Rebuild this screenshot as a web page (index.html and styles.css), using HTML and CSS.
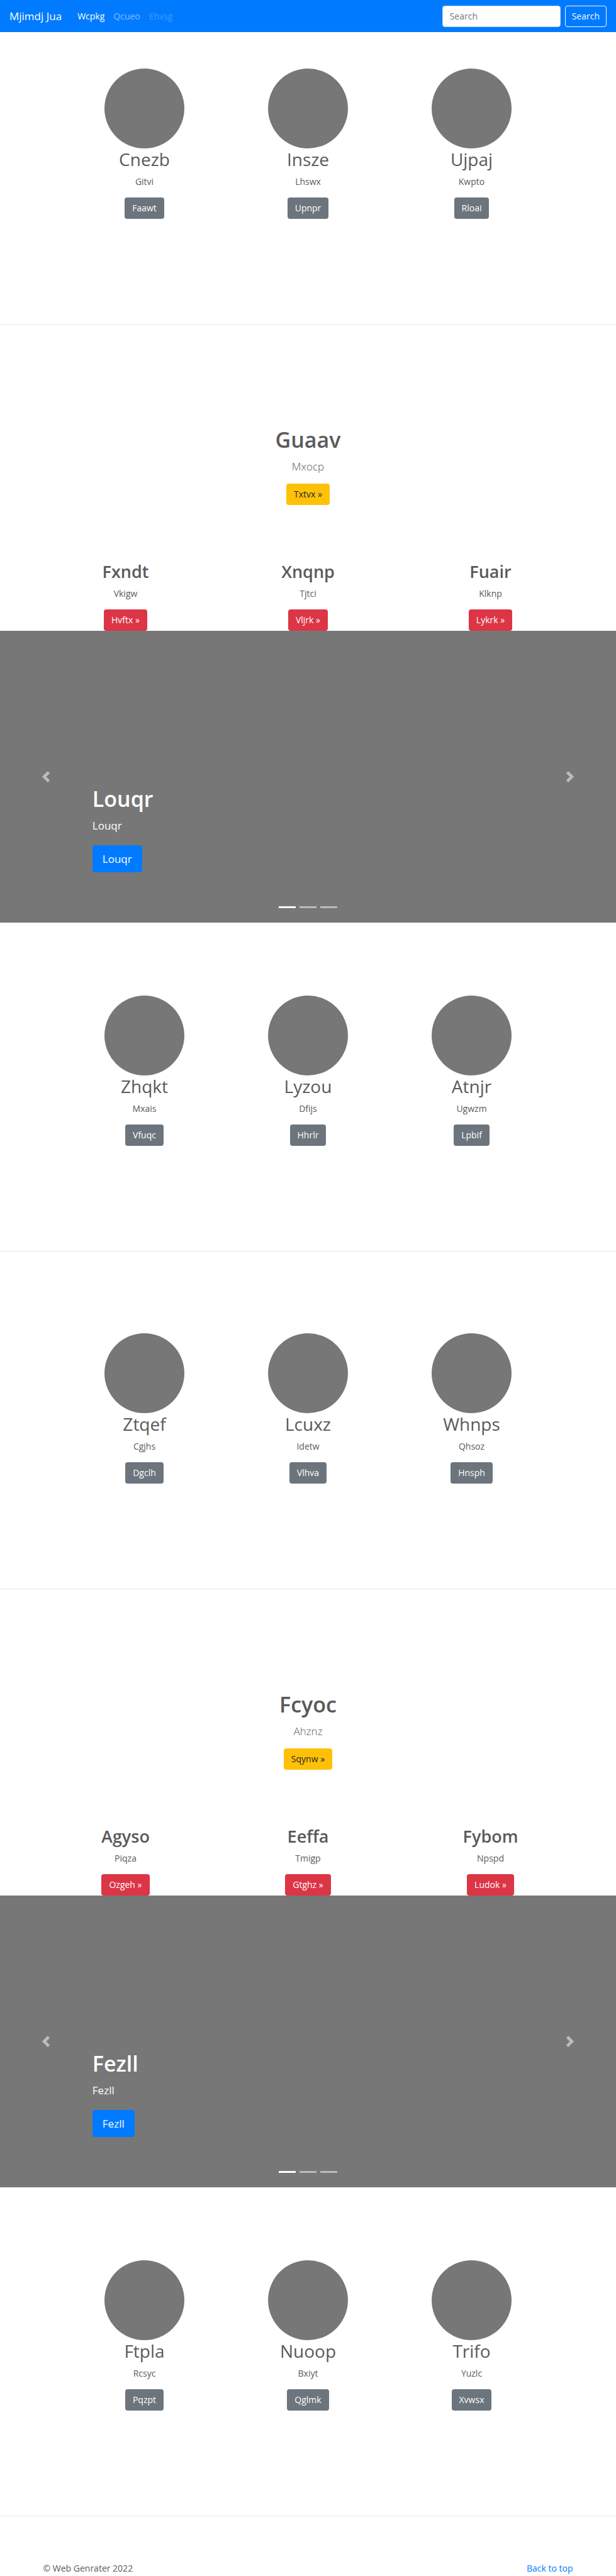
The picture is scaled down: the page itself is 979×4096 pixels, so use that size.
FILE: index.html
```html
<!DOCTYPE html>
<html lang="en">
<head>
<meta charset="utf-8">
<meta name="viewport" content="width=device-width, initial-scale=1">
<title>Mjimdj Jua</title>
<link rel="stylesheet" href="styles.css">
</head>
<body>
<header class="navbar" id="top">
  <a class="brand" href="#top">Mjimdj Jua</a>
  <nav class="nav-links">
    <a class="nav-link active" href="#">Wcpkg</a>
    <a class="nav-link" href="#">Qcueo</a>
    <a class="nav-link disabled" href="#" aria-disabled="true">Ehvsg</a>
  </nav>
  <form class="search">
    <input class="search-input" type="search" placeholder="Search" aria-label="Search">
    <button class="btn btn-outline" type="submit">Search</button>
  </form>
</header>
<main>
  <section class="features">
    <div class="feature"><div class="avatar"></div><h2>Cnezb</h2><p>Gitvi</p><a class="btn btn-secondary" href="#">Faawt</a></div>
    <div class="feature"><div class="avatar"></div><h2>Insze</h2><p>Lhswx</p><a class="btn btn-secondary" href="#">Upnpr</a></div>
    <div class="feature"><div class="avatar"></div><h2>Ujpaj</h2><p>Kwpto</p><a class="btn btn-secondary" href="#">Rloai</a></div>
  </section>
  <hr class="divider">

  <section class="hero">
    <h1>Guaav</h1>
    <p class="lead">Mxocp</p>
    <a class="btn btn-warning" href="#">Txtvx »</a>
  </section>
  <section class="cards">
    <div class="card"><h2>Fxndt</h2><p>Vkigw</p><a class="btn btn-danger" href="#">Hvftx »</a></div>
    <div class="card"><h2>Xnqnp</h2><p>Tjtci</p><a class="btn btn-danger" href="#">Vljrk »</a></div>
    <div class="card"><h2>Fuair</h2><p>Klknp</p><a class="btn btn-danger" href="#">Lykrk »</a></div>
  </section>

  <section class="carousel">
    <button class="control" type="button" aria-label="Previous"><svg class="chevron" viewBox="0 0 8 8"><path d="M5.25 0l-4 4 4 4 1.5-1.5L4.25 4l2.5-2.5L5.25 0z"/></svg></button>
    <div class="slide">
      <div class="caption">
        <h2>Louqr</h2>
        <p>Louqr</p>
        <a class="btn btn-primary" href="#">Louqr</a>
      </div>
      <div class="indicators">
        <button class="indicator current" type="button" aria-label="Slide 1"></button>
        <button class="indicator" type="button" aria-label="Slide 2"></button>
        <button class="indicator" type="button" aria-label="Slide 3"></button>
      </div>
    </div>
    <button class="control" type="button" aria-label="Next"><svg class="chevron" viewBox="0 0 8 8"><path d="M2.75 0l-1.5 1.5L3.75 4l-2.5 2.5L2.75 8l4-4-4-4z"/></svg></button>
  </section>

  <section class="features">
    <div class="feature"><div class="avatar"></div><h2>Zhqkt</h2><p>Mxais</p><a class="btn btn-secondary" href="#">Vfuqc</a></div>
    <div class="feature"><div class="avatar"></div><h2>Lyzou</h2><p>Dfijs</p><a class="btn btn-secondary" href="#">Hhrlr</a></div>
    <div class="feature"><div class="avatar"></div><h2>Atnjr</h2><p>Ugwzm</p><a class="btn btn-secondary" href="#">Lpbif</a></div>
  </section>
  <hr class="divider">

  <section class="features">
    <div class="feature"><div class="avatar"></div><h2>Ztqef</h2><p>Cgjhs</p><a class="btn btn-secondary" href="#">Dgclh</a></div>
    <div class="feature"><div class="avatar"></div><h2>Lcuxz</h2><p>Idetw</p><a class="btn btn-secondary" href="#">Vlhva</a></div>
    <div class="feature"><div class="avatar"></div><h2>Whnps</h2><p>Qhsoz</p><a class="btn btn-secondary" href="#">Hnsph</a></div>
  </section>
  <hr class="divider">

  <section class="hero">
    <h1>Fcyoc</h1>
    <p class="lead">Ahznz</p>
    <a class="btn btn-warning" href="#">Sqynw »</a>
  </section>
  <section class="cards">
    <div class="card"><h2>Agyso</h2><p>Piqza</p><a class="btn btn-danger" href="#">Ozgeh »</a></div>
    <div class="card"><h2>Eeffa</h2><p>Tmigp</p><a class="btn btn-danger" href="#">Gtghz »</a></div>
    <div class="card"><h2>Fybom</h2><p>Npspd</p><a class="btn btn-danger" href="#">Ludok »</a></div>
  </section>

  <section class="carousel">
    <button class="control" type="button" aria-label="Previous"><svg class="chevron" viewBox="0 0 8 8"><path d="M5.25 0l-4 4 4 4 1.5-1.5L4.25 4l2.5-2.5L5.25 0z"/></svg></button>
    <div class="slide">
      <div class="caption">
        <h2>Fezll</h2>
        <p>Fezll</p>
        <a class="btn btn-primary" href="#">Fezll</a>
      </div>
      <div class="indicators">
        <button class="indicator current" type="button" aria-label="Slide 1"></button>
        <button class="indicator" type="button" aria-label="Slide 2"></button>
        <button class="indicator" type="button" aria-label="Slide 3"></button>
      </div>
    </div>
    <button class="control" type="button" aria-label="Next"><svg class="chevron" viewBox="0 0 8 8"><path d="M2.75 0l-1.5 1.5L3.75 4l-2.5 2.5L2.75 8l4-4-4-4z"/></svg></button>
  </section>

  <section class="features">
    <div class="feature"><div class="avatar"></div><h2>Ftpla</h2><p>Rcsyc</p><a class="btn btn-secondary" href="#">Pqzpt</a></div>
    <div class="feature"><div class="avatar"></div><h2>Nuoop</h2><p>Bxiyt</p><a class="btn btn-secondary" href="#">Qglmk</a></div>
    <div class="feature"><div class="avatar"></div><h2>Trifo</h2><p>Yuzlc</p><a class="btn btn-secondary" href="#">Xvwsx</a></div>
  </section>
  <hr class="divider">
</main>
<footer class="footer">
  <span>© Web Genrater 2022</span>
  <a href="#top">Back to top</a>
</footer>
</body>
</html>
```
FILE: styles.css
```css
* { box-sizing: border-box; }

body {
  margin: 0;
  background: #fff;
  color: #5a5a5a;
  font: 14px/22px "Segoe UI", "Open Sans", "Noto Sans", sans-serif;
}

h1, h2, p { margin: 0; }
a { color: #007bff; text-decoration: none; }

.btn {
  display: inline-block;
  padding: 5px 11px;
  border: 1px solid transparent;
  border-radius: 4px;
  color: #fff;
  font: inherit;
  text-align: center;
}
.btn-secondary { background: #6c757d; }
.btn-warning { background: #ffc107; color: #212529; }
.btn-danger { background: #dc3545; }
.btn-outline {
  padding: 5px 10px;
  background: transparent;
  border-color: #f8f9fa;
  color: #f8f9fa;
}
.btn-primary {
  background: #007bff;
  padding: 7px 15px;
  font-size: 17px;
  line-height: 27px;
}

/* Top bar */
.navbar {
  display: flex;
  align-items: center;
  min-height: 51px;
  padding: 8px 15px;
  background: #007bff;
}
.brand {
  margin-right: 25px;
  color: #fff;
  font-size: 17px;
  line-height: 27px;
}
.nav-links { display: flex; flex: 1; gap: 14px; }
.nav-link { color: rgba(255, 255, 255, .5); }
.nav-link.active { color: #fff; }
.nav-link.disabled { color: rgba(255, 255, 255, .25); }
.search { display: flex; gap: 7px; }
.search-input {
  width: 188px;
  height: 34px;
  padding: 5px 11px;
  border: 1px solid #ced4da;
  border-radius: 4px;
  background: #fff;
  color: #495057;
  font: inherit;
}
.search-input::placeholder { color: #6c757d; opacity: 1; }

/* Round-picture columns */
.features {
  display: grid;
  grid-template-columns: repeat(3, 1fr);
  max-width: 780px;
  margin: 0 auto;
  padding: 58px 0 95px;
  text-align: center;
}
.avatar {
  width: 127px;
  height: 127px;
  margin: 0 auto;
  border-radius: 50%;
  background: #777;
}
.feature h2 {
  margin-bottom: 7px;
  font-size: 28px;
  font-weight: 400;
  line-height: 35px;
}
.feature p, .card p { margin-bottom: 14px; }

.divider {
  margin: 72px 0;
  border: 0;
  border-top: 1px solid rgba(0, 0, 0, .1);
}

/* Centred headline */
.hero { padding: 90px 14px 88px; text-align: center; }
.hero h1 {
  margin-bottom: 7px;
  font-size: 34px;
  font-weight: 600;
  line-height: 43px;
}
.lead {
  margin-bottom: 14px;
  font-size: 17px;
  font-weight: 300;
  line-height: 27px;
}

.cards {
  display: grid;
  grid-template-columns: repeat(3, 1fr);
  max-width: 870px;
  margin: 0 auto;
  text-align: center;
}
.card h2 {
  margin-bottom: 7px;
  font-size: 27px;
  font-weight: 600;
  line-height: 35px;
}

/* Carousel */
.carousel {
  display: grid;
  grid-template-columns: 15% 1fr 15%;
  min-height: 464px;
  margin-bottom: 58px;
  background: #777;
  color: #fff;
}
.control {
  display: flex;
  align-items: center;
  justify-content: center;
  padding: 0;
  border: 0;
  background: none;
  opacity: .5;
}
.chevron { width: 18px; height: 18px; fill: #fff; }
.slide {
  display: flex;
  flex-direction: column;
  justify-content: flex-end;
}
.caption { padding-bottom: 54px; font-size: 17px; line-height: 27px; }
.caption h2 {
  margin-bottom: 7px;
  font-size: 34px;
  font-weight: 600;
  line-height: 43px;
}
.caption p { margin-bottom: 18px; }
.indicators {
  display: flex;
  justify-content: center;
  gap: 6px;
  padding-bottom: 23px;
}
.indicator {
  width: 27px;
  height: 3px;
  padding: 0;
  border: 0;
  background: #fff;
  opacity: .5;
}
.indicator.current { opacity: 1; }

.footer {
  display: flex;
  justify-content: space-between;
  max-width: 870px;
  margin: 0 auto;
  padding: 0 14px;
}
```
